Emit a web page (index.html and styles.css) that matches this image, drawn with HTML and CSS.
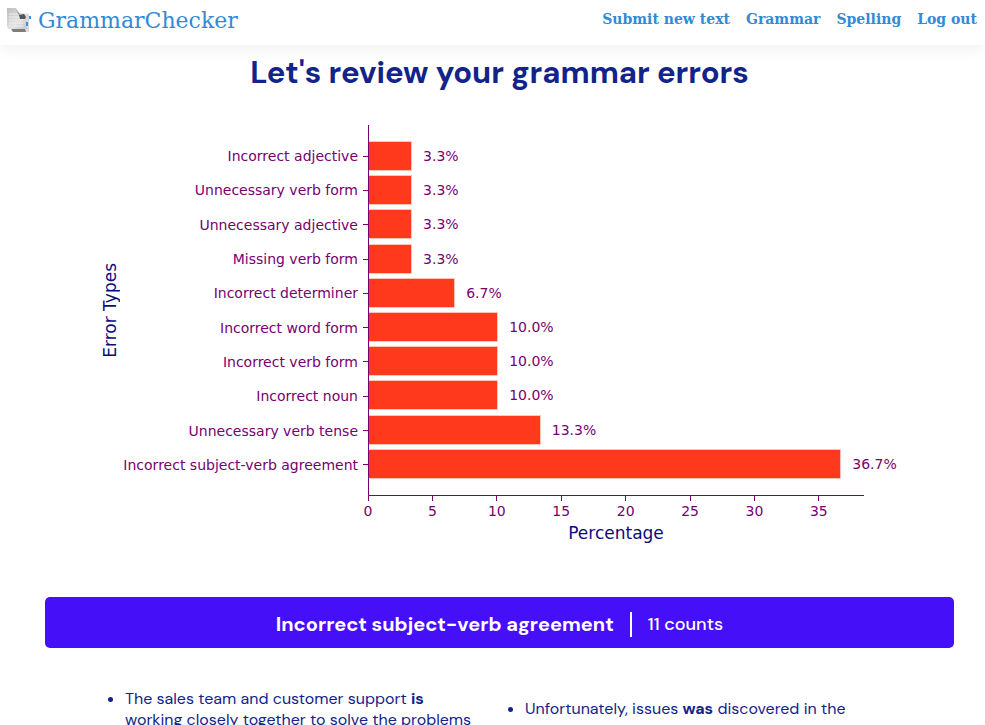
FILE: index.html
```html
<!DOCTYPE html>
<html lang="en">
<head>
<meta charset="utf-8">
<meta name="viewport" content="width=device-width, initial-scale=1">
<title>GrammarChecker</title>
<link rel="stylesheet" href="styles.css">
</head>
<body>
<header class="navbar">
  <a class="brand" href="#">
    <svg class="brand-icon" viewBox="0 0 24 24" aria-hidden="true">
      <defs>
        <linearGradient id="paper" x1="0" y1="0" x2="1" y2="1">
          <stop offset="0" stop-color="#bdbdbd"/>
          <stop offset=".6" stop-color="#e2e2e2"/>
          <stop offset="1" stop-color="#c6c6c6"/>
        </linearGradient>
      </defs>
      <path d="M4 21h15v3H6z" fill="#7d7d7d"/>
      <path d="M12 5l10 1v18h-3l-1-3-6-3z" fill="#dadada"/>
      <path d="M0 0h9l3 6 8 5v10H1L0 18z" fill="url(#paper)"/>
      <path d="M2 6h8M2 9h10M2 12h14M2 15h14M2 18h14" stroke="#efefef" stroke-width="1"/>
      <path d="M9 1l4 5-1 1z" fill="#888"/>
      <path d="M12 7l5-1 2 3-1 2h-5z" fill="#555"/>
      <path d="M22 8h2v3h-2zM19 14h2v4h-2z" fill="#3c91e6"/>
    </svg>
    <span>GrammarChecker</span>
  </a>
  <nav class="nav-links">
    <a href="#">Submit new text</a>
    <a href="#">Grammar</a>
    <a href="#">Spelling</a>
    <a href="#">Log out</a>
  </nav>
</header>
<main class="page">
  <h1 class="title">Let's review your grammar errors</h1>
  <figure class="chart">
    <div class="y-title">Error Types</div>
    <div class="labels">
      <span>Incorrect adjective</span>
      <span>Unnecessary verb form</span>
      <span>Unnecessary adjective</span>
      <span>Missing verb form</span>
      <span>Incorrect determiner</span>
      <span>Incorrect word form</span>
      <span>Incorrect verb form</span>
      <span>Incorrect noun</span>
      <span>Unnecessary verb tense</span>
      <span>Incorrect subject-verb agreement</span>
    </div>
    <div class="y-ticks"><i></i><i></i><i></i><i></i><i></i><i></i><i></i><i></i><i></i><i></i></div>
    <div class="plot">
      <div class="row"><div class="bar" style="width:8.7%"></div><span>3.3%</span></div>
      <div class="row"><div class="bar" style="width:8.7%"></div><span>3.3%</span></div>
      <div class="row"><div class="bar" style="width:8.7%"></div><span>3.3%</span></div>
      <div class="row"><div class="bar" style="width:8.7%"></div><span>3.3%</span></div>
      <div class="row"><div class="bar" style="width:17.4%"></div><span>6.7%</span></div>
      <div class="row"><div class="bar" style="width:26.1%"></div><span>10.0%</span></div>
      <div class="row"><div class="bar" style="width:26.1%"></div><span>10.0%</span></div>
      <div class="row"><div class="bar" style="width:26.1%"></div><span>10.0%</span></div>
      <div class="row"><div class="bar" style="width:34.7%"></div><span>13.3%</span></div>
      <div class="row"><div class="bar" style="width:95.4%"></div><span>36.7%</span></div>
    </div>
    <div class="x-axis">
      <span>0</span><span>5</span><span>10</span><span>15</span><span>20</span><span>25</span><span>30</span><span>35</span>
    </div>
    <div class="x-title">Percentage</div>
  </figure>
  <section>
    <h2 class="banner"><span class="error-name">Incorrect subject-verb agreement</span><span class="count">11 counts</span></h2>
    <div class="examples">
      <ul><li>The sales team and customer support <b>is</b> working closely together to solve the problems</li></ul>
      <ul class="short"><li>Unfortunately, issues <b>was</b> discovered in the</li></ul>
    </div>
  </section>
</main>
</body>
</html>
```
FILE: styles.css
```css
* { box-sizing: border-box; }

body {
  margin: 0;
  background: #fff;
  color: #12238a;
  font-family: "DM Sans", Inter, sans-serif;
  font-size: 16px;
  line-height: 21px;
}

.navbar {
  display: flex;
  align-items: flex-start;
  justify-content: space-between;
  height: 45px;
  padding: 8px 8px 0 7px;
  box-shadow: 0 4px 16px rgba(0, 0, 0, .06);
  font-family: "Special Elite", "DejaVu Serif", serif;
}

.navbar a { color: #328ad6; text-decoration: none; }

.brand { display: flex; gap: 7px; font-size: 22px; line-height: 26px; }

.brand-icon { width: 24px; height: 24px; }

.nav-links {
  display: flex;
  gap: 16px;
  font-size: 14px;
  font-weight: 700;
  line-height: 22px;
}

.page { padding: 0 31px 0 45px; }

.title {
  margin: 8px 0 0;
  font-size: 31px;
  font-weight: 700;
  line-height: 40px;
  text-align: center;
}

.chart {
  display: grid;
  grid-template-columns: 28px 232px 10px 1fr;
  grid-template-rows: 371px 25px 24px;
  margin: 32px 90px 0 53px;
  color: #78006f;
  font-family: "DejaVu Sans", sans-serif;
  font-size: 14px;
  line-height: 18px;
}

.y-title, .x-title { color: #0a0a80; font-size: 17px; }

.y-title {
  place-self: center start;
  writing-mode: vertical-rl;
  transform: rotate(180deg);
  line-height: 24px;
}

.labels, .y-ticks, .plot {
  display: grid;
  grid-auto-rows: 1fr;
  align-items: center;
  padding: 14px 0;
}

.labels {
  grid-template-columns: 100%;
  justify-items: end;
  white-space: nowrap;
}

.y-ticks i { justify-self: end; width: 5px; height: 1px; background: #78006f; }

.plot { border-left: 1px solid #78006f; border-bottom: 1px solid #78006f; }

.row { display: flex; align-items: center; gap: 11px; white-space: nowrap; }

.bar { flex: none; height: 30px; background: #ff391c; border: 1px solid #ffc4b8; border-width: 1px 1px 1px 0; }

.x-axis {
  grid-column: 4;
  display: flex;
  width: 100%;
  margin-left: -6.49%;
}

.x-axis span { flex: 0 0 calc(100% / 7.7); text-align: center; }

.x-axis span::before {
  content: "";
  display: block;
  width: 1px;
  height: 5px;
  margin: 0 auto 1px;
  background: #78006f;
}

.x-title { grid-column: 4; text-align: center; line-height: 24px; }

.banner {
  display: flex;
  align-items: center;
  justify-content: center;
  margin: 52px 0 0;
  height: 51px;
  padding-top: 4px;
  border-radius: 5px;
  background: #4510f8;
  color: #fff;
  font-size: 20px;
  line-height: 25px;
}

.count {
  margin-left: 16px;
  padding-left: 16px;
  border-left: 2px solid #fff;
  font-size: 18px;
  font-weight: 500;
}

.examples {
  display: grid;
  grid-template-columns: 350px 350px;
  gap: 50px;
  padding: 40px 40px 0;
}

.examples ul { margin: 0; padding-left: 40px; width: 400px; }

.examples .short { padding-top: 10px; }
```
